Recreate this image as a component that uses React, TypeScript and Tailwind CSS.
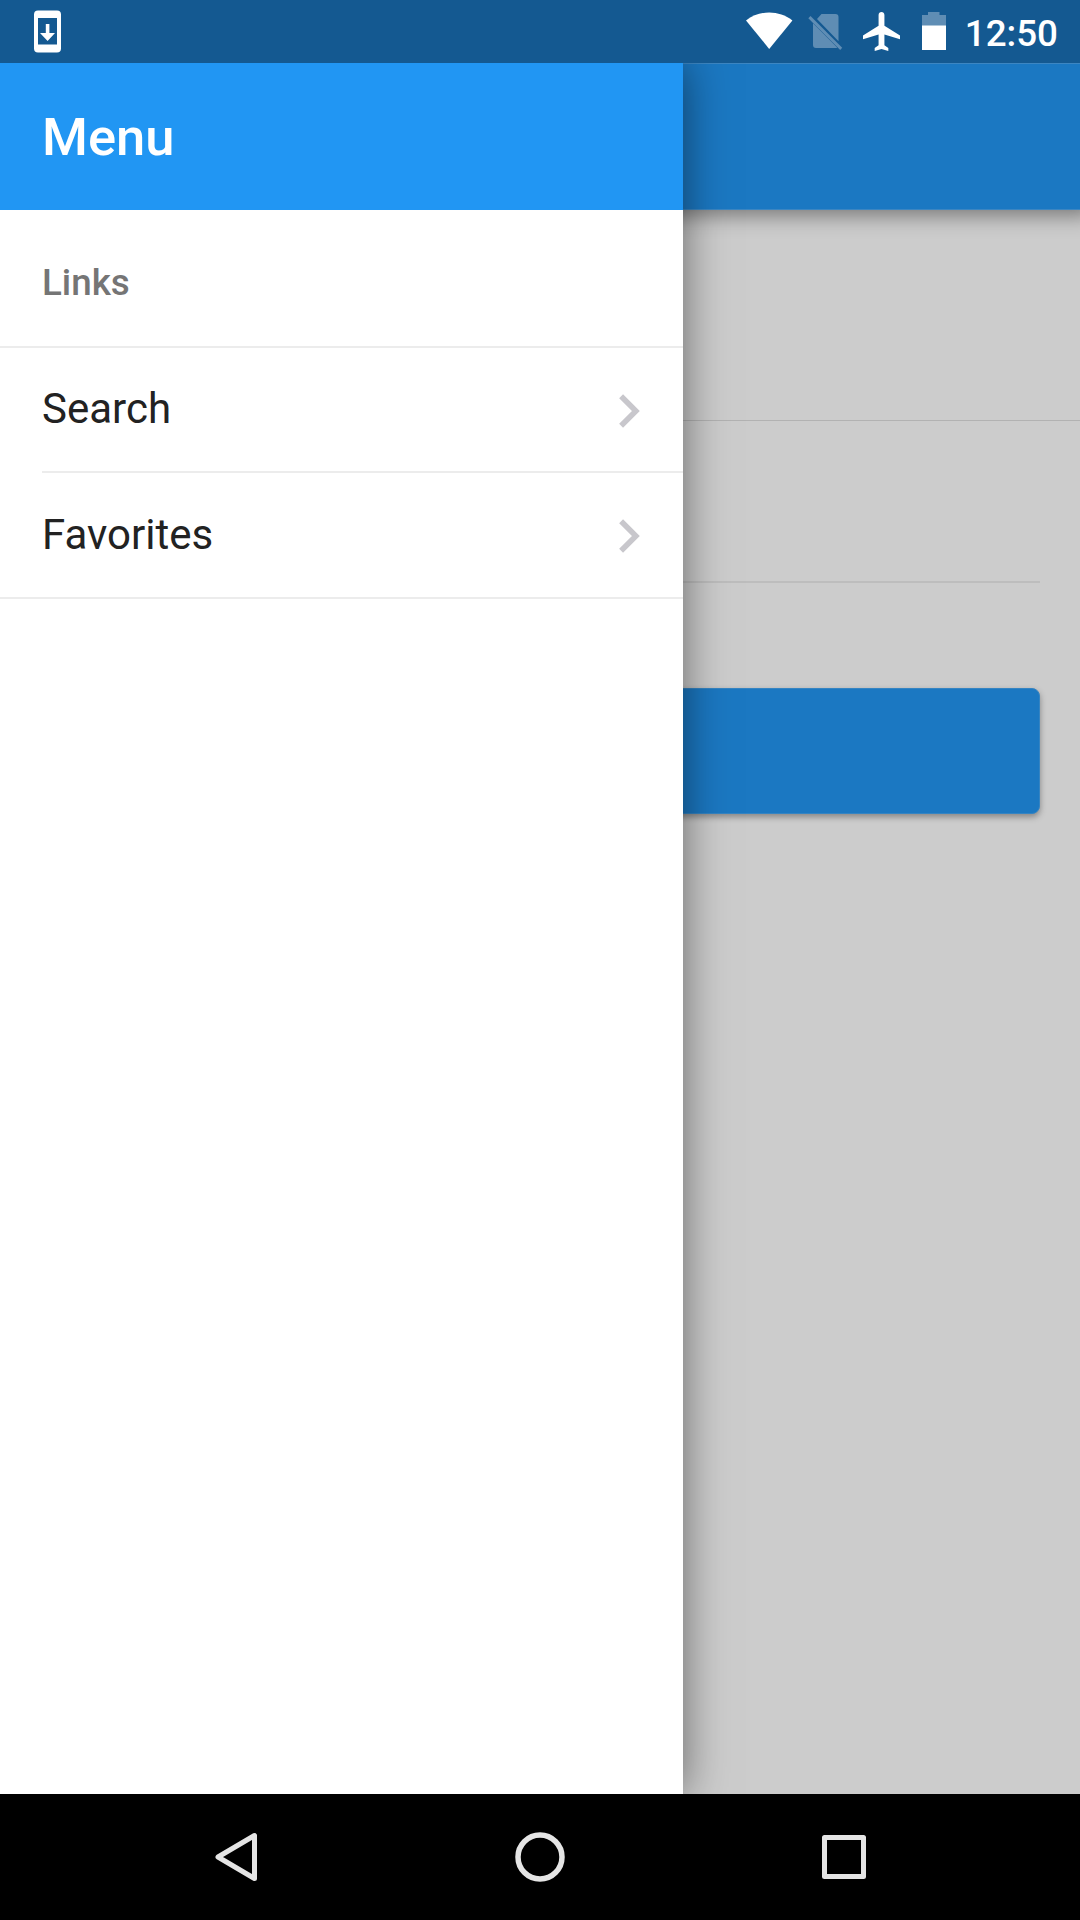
import React from "react";

function StatusBar() {
  return (
    <header className="relative z-30 flex h-[63px] shrink-0 items-start bg-[#145991] pl-[34px] pr-[22px] text-white">
      <svg className="mt-[10px] h-[43px] w-[27px]" viewBox="0 0 27 43" fill="currentColor">
        <path fillRule="evenodd" d="M4 .5h19a4 4 0 0 1 4 4v34a4 4 0 0 1-4 4H4a4 4 0 0 1-4-4v-34a4 4 0 0 1 4-4zM4 8v26.5h19V8z" />
        <path d="M11.8 14h3.6v9H21l-7.4 8L6 23h5.8z" />
      </svg>
      <div className="ml-auto flex items-start">
        <svg className="mt-[12px] h-[38px] w-[47px]" viewBox="0 0 47 38" fill="currentColor">
          <path d="M0 8.400C6.800 3.200 14.800.5 23.200.5S39.600 3.200 46.400 8.400L23.200 37z" />
        </svg>
        <svg className="ml-[15px] mt-[14px] h-[37px] w-[36px] text-[#5f8db4]" viewBox="0 0 36 37" fill="currentColor">
          <path d="M13.500 0H27.500a3 3 0 0 1 3 3V27.200L9 5.000zM5 9.300L29.200 33.500Q28.600 34 27.500 34H8a3 3 0 0 1-3-3z" />
          <path d="M2.500 2L34.200 33.800 32.200 36 .3 4.200z" />
        </svg>
        <svg className="ml-[19px] mt-[12px] h-[39px] w-[37px]" viewBox="2 2 19 20" fill="currentColor">
          <path d="M21 16v-2l-8-5V3.500c0-.83-.67-1.500-1.500-1.500S10 2.670 10 3.500V9l-8 5v2l8-2.500V19l-2 1.500V22l3.500-1 3.500 1v-1.500L13 19v-5.500l8 2.500z" />
        </svg>
        <svg className="ml-[22px] mt-[12px] h-[38px] w-[24px]" viewBox="0 0 24 38">
          <path fill="#5f8db4" d="M6 0h11.500v3H24v11H0V3h6z" />
          <path fill="white" d="M0 13.500h24V38H0z" />
        </svg>
        <span className="ml-[19px] mt-[12px] text-[36.75px] font-medium leading-[43px]">12:50</span>
      </div>
    </header>
  );
}

function MenuLink({ label, inset }: { label: string; inset?: boolean }) {
  return (
    <li className={inset ? "flex h-[125px] pl-[42px]" : "flex h-[124px] pl-[42px]"}>
      <a className={inset ? "flex flex-1 items-center justify-between border-b-2 border-[#ececec] pb-px pr-[43px]" : "flex flex-1 items-center justify-between pb-px pr-[43px]"}>
        <span className="text-[42px] leading-[50px] text-[#222222]">{label}</span>
        <svg className="mt-[3px] h-[34px] w-[21px]" viewBox="0 0 21 34" fill="none" stroke="#c8c7cc" strokeWidth="5.500">
          <path d="M2.100 2.200L16.900 17 2.100 31.800" />
        </svg>
      </a>
    </li>
  );
}

function Drawer() {
  return (
    <aside className="absolute inset-y-0 left-0 w-[683px] bg-white shadow-[0_0_42px_rgba(0,0,0,0.5)]">
      <div className="flex h-[147px] items-center bg-[#2196f3] pl-[42px]">
        <h1 className="text-[52.5px] font-medium leading-[62px] text-white">Menu</h1>
      </div>
      <h2 className="flex h-[138px] items-center border-b-2 border-[#ececec] pl-[42px] pt-[9px] text-[36.75px] font-medium text-[#757575]">Links</h2>
      <ul className="border-b-2 border-[#ececec]">
        <MenuLink label="Search" inset />
        <MenuLink label="Favorites" />
      </ul>
    </aside>
  );
}

function Page() {
  return (
    <div className="flex h-full flex-col bg-[#cccccc]">
      <div className="h-[147px] border-y border-[#3c86c2] bg-[#1b78c2] shadow-[0_-7px_20px_12px_rgba(0,0,0,0.43)]" />
      <div className="h-[211px] border-b border-[#b2b2b2]" />
      <div className="mx-[40px] h-[162px] border-b-2 border-[#bdbdbd]" />
      <div className="mx-[40px] mt-[105px] h-[126px] rounded-[8px] border border-[#3584c2] bg-[#1b78c2] shadow-[0_3px_6px_rgba(0,0,0,0.35)]" />
    </div>
  );
}

function NavigationBar() {
  return (
    <nav className="relative z-30 flex h-[126px] shrink-0 items-center bg-black pl-[215px] text-[#e5e5e5]">
      <svg className="h-[50px] w-[43px]" viewBox="0 0 43 50" fill="none" stroke="currentColor" strokeWidth="5" strokeLinejoin="round">
        <path d="M39.500 3.500v43L3 25z" />
      </svg>
      <svg className="ml-[257px] h-[50px] w-[50px]" viewBox="0 0 50 50" fill="none" stroke="currentColor" strokeWidth="5.500">
        <circle cx="25" cy="25" r="22" />
      </svg>
      <svg className="ml-[257px] h-[44px] w-[44px]" viewBox="0 0 44 44" fill="none" stroke="currentColor" strokeWidth="5" strokeLinejoin="round">
        <path d="M2.500 2.500h39v39h-39z" />
      </svg>
    </nav>
  );
}

export default function App() {
  return (
    <div className="flex h-[1920px] w-[1080px] flex-col overflow-hidden font-[Roboto,sans-serif]">
      <StatusBar />
      <main className="relative flex-1 overflow-hidden">
        <Page />
        <Drawer />
      </main>
      <NavigationBar />
    </div>
  );
}
